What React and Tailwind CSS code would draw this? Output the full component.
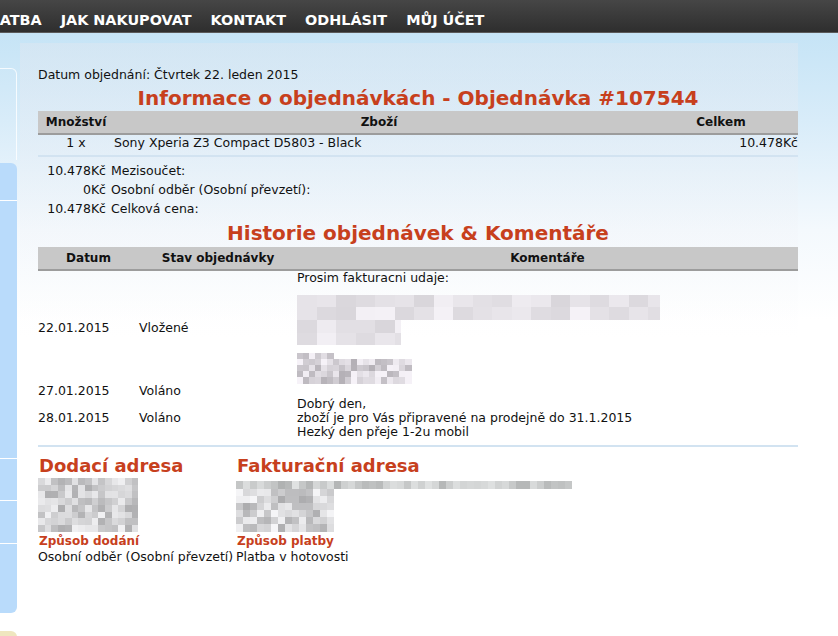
import React from "react";

function rng(seed) {
  let s = seed;
  return () => {
    s = (s * 9301 + 49297) % 233280;
    return s / 233280;
  };
}

function Mosaic({ rows, cell, seed, min, max, tint = [0, 0, 0], className = "" }) {
  const r = rng(seed);
  const w = Math.max(...rows) * cell;
  const h = rows.length * cell;
  const rects = [];
  rows.forEach((n, y) => {
    for (let x = 0; x < n; x++) {
      const v = Math.round(min + (max - min) * r());
      const c = `rgb(${Math.min(255, v + tint[0])},${Math.min(255, v + tint[1])},${Math.min(255, v + tint[2])})`;
      rects.push(<rect key={`${x}-${y}`} x={x * cell} y={y * cell} width={cell + 0.5} height={cell + 0.5} fill={c} />);
    }
  });
  return (
    <svg width={w} height={h} className={"block " + className} shapeRendering="crispEdges">
      {rects}
    </svg>
  );
}

function Blur1() {
  const r = rng(7);
  const rects = [];
  const cw = 19.5;
  const rowsDef = [
    { y: 0, h: 12, n: 18.6 },
    { y: 12, h: 13, n: 18.6 },
    { y: 25, h: 13, n: 5.3 },
    { y: 38, h: 12, n: 5.3 },
  ];
  rowsDef.forEach((row, ri) => {
    const n = Math.ceil(row.n);
    for (let i = 0; i < n; i++) {
      const v = Math.round(215 + 30 * r());
      const c = `rgb(${v},${v - 3},${v + 2})`;
      const wdt = i === n - 1 && row.n % 1 ? (row.n % 1) * cw : cw;
      rects.push(<rect key={ri + "-" + i} x={i * cw} y={row.y} width={wdt + 0.5} height={row.h} fill={c} />);
    }
  });
  return (
    <svg width="363" height="50" className="block" shapeRendering="crispEdges">
      {rects}
    </svg>
  );
}

const navItems = ["PLATBA", "JAK NAKUPOVAT", "KONTAKT", "ODHLÁSIT", "MŮJ ÚČET"];

export default function App() {
  return (
    <div className="w-[838px] h-[636px] overflow-hidden relative font-['DejaVu_Sans',Verdana,sans-serif] text-[12.5px] text-[#111] bg-[linear-gradient(to_bottom,#bfe1f5_0px,#d8ecf9_120px,#f4f9fd_230px,#ffffff_320px)]">
      {/* Top nav */}
      <div className="h-[33px] bg-[linear-gradient(to_bottom,#464646,#2e2e2e)] border-b border-[#5a5a5a] flex items-center gap-[19px] overflow-hidden">
        {navItems.map((t, i) => (
          <span
            key={t}
            className={
              "text-white font-bold text-[14.4px] whitespace-nowrap leading-none mt-[8px] " +
              (i === 0 ? "-ml-[20px]" : "")
            }
          >
            {t}
          </span>
        ))}
      </div>

      <div className="flex">
        {/* Sidebar */}
        <div className="w-[17px] shrink-0 flex flex-col">
          <div className="mt-[35px] h-[92px] border border-l-0 border-b-0 border-white/80 rounded-tr-[6px]" />
          <div className="mt-[3px] h-[450px] bg-[#b9dbfb] rounded-tr-[6px] rounded-br-[6px] flex flex-col">
            <div className="h-[38px] border-b border-white" />
            <div className="h-[258px] border-b border-white" />
            <div className="h-[42px] border-b border-white" />
            <div className="h-[43px] border-b border-white" />
          </div>
          <div className="mt-[18px] h-[20px] bg-[#efe6bf] rounded-tr-[6px]" />
        </div>

        {/* Content */}
        <div className="ml-[3px] w-[778px] mt-[10px] h-[592px] bg-[linear-gradient(to_bottom,rgba(228,232,240,0.4),rgba(255,255,255,0.2)_50%,rgba(255,255,255,0))] overflow-hidden pl-[18px]">
          <div className="w-[760px]">
            <div className="pt-[25px] leading-[14px]">Datum objednání: Čtvrtek 22. leden 2015</div>
            <h1 className="text-center text-[#c7401d] font-bold text-[20px] leading-[24px] mt-[4px]">
              Informace o objednávkách - Objednávka #107544
            </h1>

            {/* Products table */}
            <div className="grid grid-cols-[76px_530px_154px] mt-[1px]">
              <div className="h-[24px] bg-[#c8c8c8] border-b-2 border-[#9c9c9c] font-bold text-[12px] flex items-center justify-center">Množství</div>
              <div className="h-[24px] bg-[#c8c8c8] border-b-2 border-[#9c9c9c] font-bold text-[12px] flex items-center justify-center">Zboží</div>
              <div className="h-[24px] bg-[#c8c8c8] border-b-2 border-[#9c9c9c] font-bold text-[12px] flex items-center justify-center">Celkem</div>
              <div className="h-[14px] mt-[1px] flex items-center justify-center">1 x</div>
              <div className="h-[14px] mt-[1px] flex items-center">Sony Xperia Z3 Compact D5803 - Black</div>
              <div className="h-[14px] mt-[1px] flex items-center justify-end whitespace-nowrap">10.478Kč</div>
            </div>
            <div className="mt-[5px] border-t-2 border-[#d2e3f1]" />

            {/* Totals */}
            <div className="grid grid-cols-[68px_1fr] gap-x-[5px] mt-[4px] leading-[19px]">
              <div className="text-right">10.478Kč</div>
              <div>Mezisoučet:</div>
              <div className="text-right">0Kč</div>
              <div>Osobní odběr (Osobní převzetí):</div>
              <div className="text-right">10.478Kč</div>
              <div>Celková cena:</div>
            </div>

            <h1 className="text-center text-[#c7401d] font-bold text-[20px] leading-[24px] mt-[3px]">
              Historie objednávek &amp; Komentáře
            </h1>

            {/* History table */}
            <div className="grid grid-cols-[101px_158px_501px] leading-[14px] mt-[2px]">
              <div className="h-[24px] bg-[#c8c8c8] border-b-2 border-[#9c9c9c] font-bold text-[12px] flex items-center justify-center">Datum</div>
              <div className="h-[24px] bg-[#c8c8c8] border-b-2 border-[#9c9c9c] font-bold text-[12px] flex items-center justify-center">Stav objednávky</div>
              <div className="h-[24px] bg-[#c8c8c8] border-b-2 border-[#9c9c9c] font-bold text-[12px] flex items-center justify-center">Komentáře</div>

              <div className="flex items-center">22.01.2015</div>
              <div className="flex items-center">Vložené</div>
              <div>
                <div>Prosim fakturacni udaje:</div>
                <div className="mt-[10px]"><Blur1 /></div>
                <div className="mt-[8px]">
                  <Mosaic rows={[6, 19, 19, 19, 19]} cell={6} seed={3} min={175} max={245} tint={[4, 0, 6]} className="w-[116px] h-[31px]" />
                </div>
              </div>

              <div className="flex items-center h-[13px]">27.01.2015</div>
              <div className="flex items-center h-[13px]">Voláno</div>
              <div className="h-[13px]" />

              <div className="flex items-center">28.01.2015</div>
              <div className="flex items-center">Voláno</div>
              <div>
                <div>Dobrý den,</div>
                <div>zboží je pro Vás připravené na prodejně do 31.1.2015</div>
                <div>Hezký den přeje 1-2u mobil</div>
              </div>
            </div>
            <div className="mt-[6px] border-t-2 border-[#d2e3f1]" />

            {/* Addresses */}
            <div className="grid grid-cols-[198px_1fr] mt-[8px]">
              <div>
                <h2 className="text-[#c7401d] font-bold text-[18px] leading-[22px] pl-[1px]">Dodací adresa</h2>
                <div className="mt-[1px]">
                  <Mosaic rows={[15, 15, 15, 15, 15, 15, 15, 15]} cell={6.7} seed={11} min={170} max={240} tint={[2, 2, 4]} className="w-[100px] h-[54px]" />
                </div>
                <div className="text-[#c7401d] font-bold text-[12px] mt-[2px] leading-[15px] pl-[1px]">Způsob dodání</div>
                <div className="leading-[15px] whitespace-nowrap">Osobní odběr (Osobní převzetí)</div>
              </div>
              <div>
                <h2 className="text-[#c7401d] font-bold text-[18px] leading-[22px] pl-[1px]">Fakturační adresa</h2>
                <div className="mt-[4px] flex flex-col">
                  <Mosaic rows={[48]} cell={7} seed={5} min={175} max={225} tint={[0, 2, 2]} className="w-[336px] h-[8px]" />
                  <Mosaic rows={[14, 14, 14, 14, 14, 14]} cell={7} seed={19} min={170} max={245} tint={[2, 2, 4]} className="w-[98px] h-[43px]" />
                </div>
                <div className="text-[#c7401d] font-bold text-[12px] mt-[2px] leading-[15px] pl-[1px]">Způsob platby</div>
                <div className="leading-[15px]">Platba v hotovosti</div>
              </div>
            </div>
          </div>
        </div>
      </div>
    </div>
  );
}
